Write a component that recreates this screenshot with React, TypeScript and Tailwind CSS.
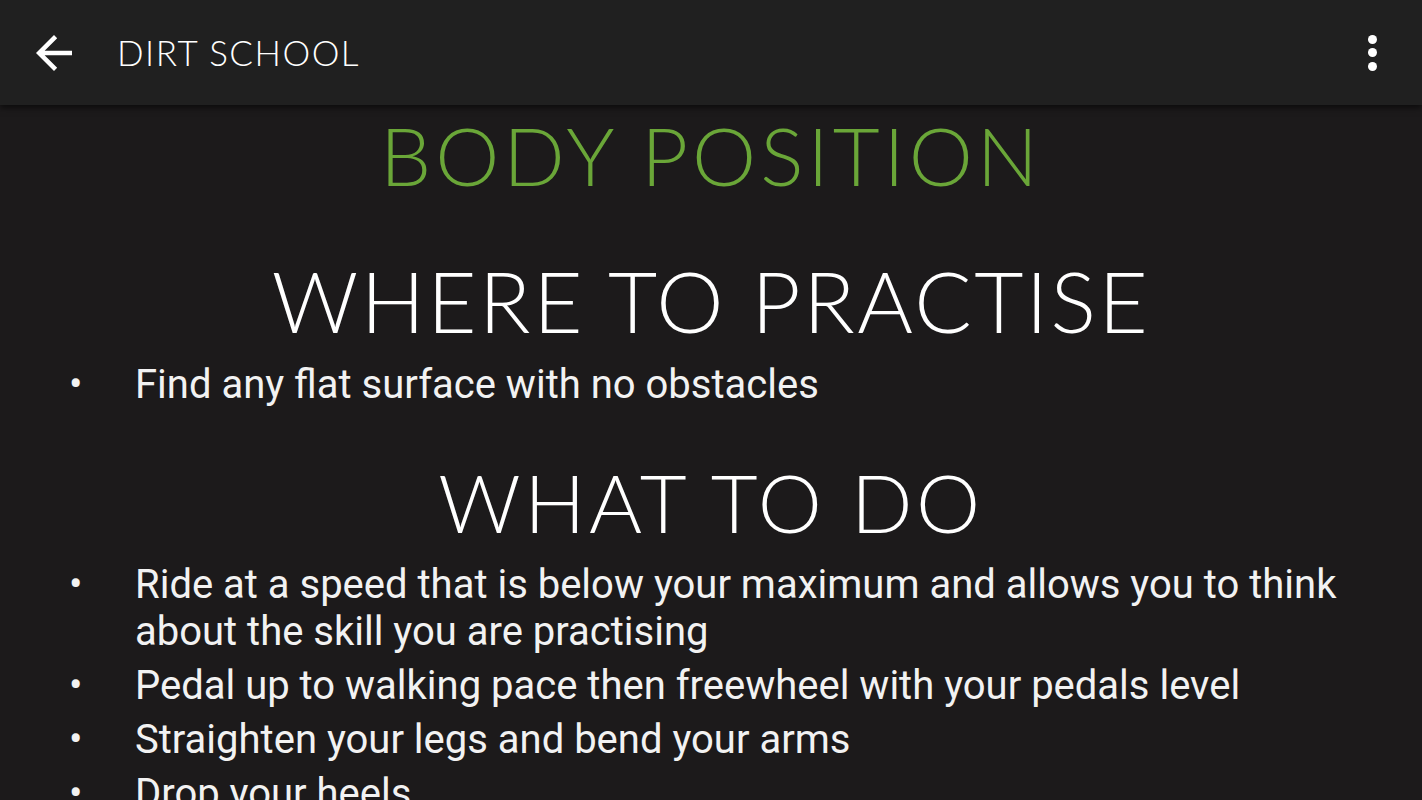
import React from "react";

const practise = ["Find any flat surface with no obstacles"];

const steps = [
  "Ride at a speed that is below your maximum and allows you to think about the skill you are practising",
  "Pedal up to walking pace then freewheel with your pedals level",
  "Straighten your legs and bend your arms",
  "Drop your heels",
];

const heading = { fontFamily: "Lato, 'DejaVu Sans', sans-serif" };
const body = { fontFamily: "Roboto, 'Liberation Sans', sans-serif" };

const BulletList = ({ items }: { items: string[] }) => (
  <ul className="flex flex-col gap-[7px] pr-[30px]" style={body}>
    {items.map((text, i) => (
      <li key={i} className="flex text-[40px] leading-[47px] text-[#f2f2f2]">
        <span className="w-[135px] shrink-0 pl-[69px]">•</span>
        <span>{text}</span>
      </li>
    ))}
  </ul>
);

const App = () => {
  return (
    <div className="w-[1422px] h-[800px] overflow-hidden bg-[#1c1a1b]">
      <header className="relative z-10 h-[105px] flex items-center bg-[#202020] shadow-[0_3px_6px_rgba(0,0,0,0.55)]">
        <div className="w-[117px] pl-[27px]">
          <svg width="54" height="54" viewBox="0 0 24 24" fill="#ffffff">
            <path d="M20 11H7.83l5.59-5.59L12 4l-8 8 8 8 1.41-1.41L7.83 13H20v-2z" />
          </svg>
        </div>
        <h1
          className="text-[35px] font-light tracking-[1.5px] text-white"
          style={heading}
        >
          DIRT SCHOOL
        </h1>
        <div className="ml-auto mr-[45px] flex flex-col gap-[4.5px]">
          <span className="block w-[9px] h-[9px] rounded-full bg-white" />
          <span className="block w-[9px] h-[9px] rounded-full bg-white" />
          <span className="block w-[9px] h-[9px] rounded-full bg-white" />
        </div>
      </header>

      <main className="pt-[9px]">
        <h2
          className="text-center text-[81px] leading-[81px] font-light tracking-[4px] text-[#6aa638]"
          style={heading}
        >
          BODY POSITION
        </h2>
        <h3
          className="mt-[63px] mb-[18px] text-center text-[85px] leading-[85px] font-light tracking-[2.5px] text-white"
          style={heading}
        >
          WHERE TO PRACTISE
        </h3>
        <BulletList items={practise} />
        <h3
          className="mt-[53px] mb-[19px] text-center text-[81px] leading-[81px] font-light tracking-[3.5px] text-white"
          style={heading}
        >
          WHAT TO DO
        </h3>
        <BulletList items={steps} />
      </main>
    </div>
  );
};

export default App;
